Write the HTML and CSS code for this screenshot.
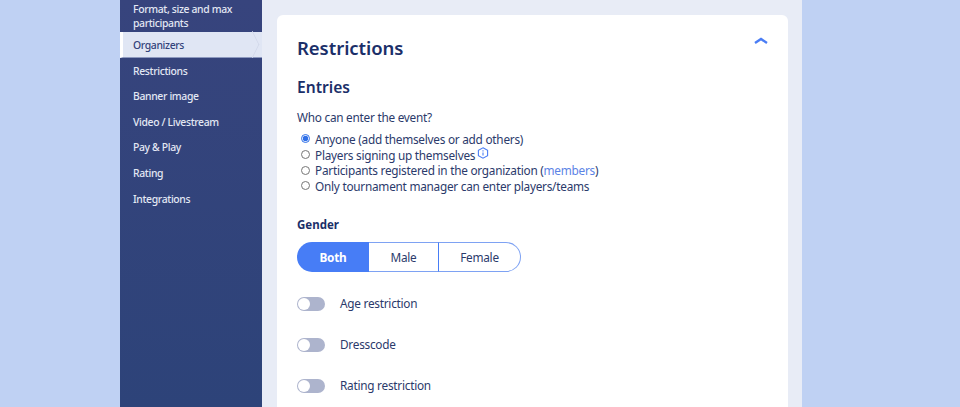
FILE: index.html
```html
<!DOCTYPE html>
<html lang="en">
<head>
    <meta charset="UTF-8">
    <meta name="viewport" content="width=device-width, initial-scale=1.0">
    <title>Tournament settings</title>
    <link rel="stylesheet" href="styles.css">
</head>

<body>
  <div class="page">
    <nav class="sidebar">
      <a class="side-item first">Format, size and max participants</a>
      <a class="side-item active">Organizers</a>
      <a class="side-item">Restrictions</a>
      <a class="side-item">Banner image</a>
      <a class="side-item">Video / Livestream</a>
      <a class="side-item">Pay &amp; Play</a>
      <a class="side-item">Rating</a>
      <a class="side-item">Integrations</a>
    </nav>

    <main class="content">
      <section class="card">
        <div class="card-head">
          <h1>Restrictions</h1>
          <svg class="chevron" viewBox="0 0 14 7" width="14" height="7">
            <path d="M1 6 L7 2 L13 6" fill="none" stroke="#4a7df5" stroke-width="2.4"/>
          </svg>
        </div>

        <h2>Entries</h2>
        <p class="question">Who can enter the event?</p>

        <div class="radio-list">
          <label class="radio-row"><input type="radio" name="entry" checked><span>Anyone (add themselves or add others)</span></label>
          <label class="radio-row"><input type="radio" name="entry"><span>Players signing up themselves</span>
            <svg class="info" viewBox="0 0 12 12" width="12" height="12">
              <path d="M6 .8 L10.6 3.3 V8.7 L6 11.2 L1.4 8.7 V3.3 Z" fill="none" stroke="#4a7df5" stroke-width="1.1"/>
              <path d="M6 5.4 V8.6 M6 3.3 V4.4" stroke="#4a7df5" stroke-width="1.1"/>
            </svg>
          </label>
          <label class="radio-row"><input type="radio" name="entry"><span>Participants registered in the organization (<a class="link">members</a>)</span></label>
          <label class="radio-row"><input type="radio" name="entry"><span>Only tournament manager can enter players/teams</span></label>
        </div>

        <h3>Gender</h3>
        <div class="segments">
          <button class="segment selected">Both</button>
          <button class="segment male">Male</button>
          <button class="segment female">Female</button>
        </div>

        <div class="toggle-row"><span class="toggle"></span>Age restriction</div>
        <div class="toggle-row"><span class="toggle"></span>Dresscode</div>
        <div class="toggle-row"><span class="toggle"></span>Rating restriction</div>
      </section>
    </main>
  </div>
</body>

</html>
```

FILE: styles.css
```css
* {
    box-sizing: border-box;
    margin: 0;
    padding: 0;
    font-family: "Noto Sans", "Open Sans", sans-serif;
}

html, body {
    height: 407px;
    overflow: hidden;
}

body {
    background-color: #bfd1f3;
}

.page {
    display: flex;
    width: 682px;
    height: 407px;
    margin-left: 120px;
    background-color: #e8ecf6;
    overflow: hidden;
}

.sidebar {
    width: 142px;
    flex-shrink: 0;
    background: linear-gradient(#37447d, #2d4379);
    padding-top: 1px;
}

.side-item {
    display: block;
    height: 25.6px;
    padding: 0 12px 0 13px;
    font-size: 10.4px;
    font-weight: 500;
    letter-spacing: -0.35px;
    line-height: 25.6px;
    color: #e3e8f4;
}

.side-item.first {
    height: 31px;
    padding-top: 1px;
    line-height: 14px;
}

.side-item.active {
    position: relative;
    height: 26px;
    margin-bottom: .7px;
    background: #e0e6f4;
    color: #33437b;
    border-left: 3px solid #fff;
    padding-left: 10px;
    line-height: 27px;
    border-bottom: 1px solid #8d99bf;
}

/* little arrow sticking out of the selected item */
.side-item.active::after {
    content: "";
    position: absolute;
    top: 3px;
    right: -6px;
    width: 18px;
    height: 18px;
    background: #e0e6f4;
    border-top: 1px solid #cfd6e8;
    border-right: 1px solid #cfd6e8;
    transform: translateX(-6px) scaleX(.5) rotate(45deg);
}

.content {
    flex-grow: 1;
    padding: 15px 14px 0 15px;
}

.card {
    height: 420px;
    padding: 20px 21px 0 20px;
    background: white;
    border-radius: 6px;
    color: #1b2f69;
}

.card-head {
    display: flex;
    justify-content: space-between;
}

.chevron {
    margin-top: 2px;
    margin-right: -1px;
}

h1 {
    font-size: 18.5px;
    font-weight: 600;
    letter-spacing: -0.05px;
    line-height: 26px;
}

h2 {
    margin-top: 15px;
    font-size: 15.6px;
    font-weight: 600;
    line-height: 22px;
}

.question,
.radio-row,
.toggle-row {
    font-size: 11.8px;
    letter-spacing: -0.25px;
    color: #2b3a6b;
}

.question {
    margin-top: 11px;
    line-height: 17px;
}

.radio-list {
    margin-top: 5px;
    margin-left: 4px;
}

.radio-row {
    display: flex;
    align-items: center;
    height: 15.7px;
}

.radio-row input {
    width: 9px;
    height: 9px;
    margin-right: 5px;
    accent-color: #2f6fe8;
}

.info {
    margin-left: 2px;
    margin-bottom: 3px;
}

.link {
    color: #5b83e6;
}

h3 {
    margin-top: 22px;
    font-size: 11.5px;
    font-weight: 700;
    line-height: 17px;
}

.segments {
    display: flex;
    margin-top: 9px;
}

.segment {
    height: 30px;
    background: white;
    border: 1px solid #7ea2f3;
    border-left: none;
    font-size: 11.8px;
    letter-spacing: -0.25px;
    color: #2b3a6b;
}

.segment.selected {
    width: 72px;
    border: none;
    border-radius: 15px 0 0 15px;
    background: #477df6;
    color: white;
    font-weight: 700;
}

.segment.male {
    width: 70px;
    border-right: 1px solid #477df6;
}

.segment.female {
    width: 82px;
    border-radius: 0 15px 15px 0;
}

.toggle-row {
    display: flex;
    align-items: center;
    height: 15px;
    margin-top: 26px;
}

.segments + .toggle-row {
    margin-top: 24px;
}

.toggle {
    position: relative;
    width: 28px;
    height: 14px;
    margin-top: 2px;
    margin-right: 15px;
    border-radius: 7px;
    background: #adb4cd;
}

.toggle::before {
    content: "";
    position: absolute;
    top: 1px;
    left: 1px;
    width: 12px;
    height: 12px;
    border-radius: 50%;
    background: white;
}
```
